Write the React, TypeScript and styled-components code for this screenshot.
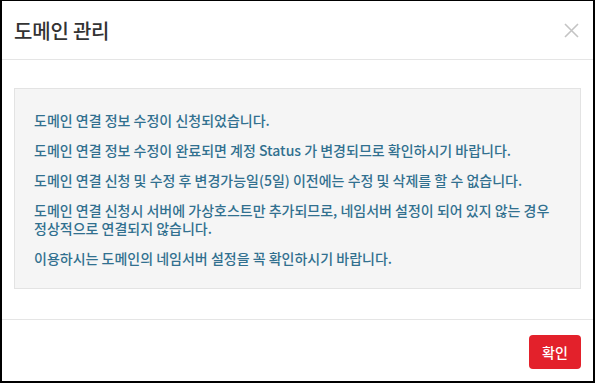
import React from 'react';
import styled, { createGlobalStyle } from 'styled-components';

const GlobalStyle = createGlobalStyle`
	html, body {
		margin: 0;
		padding: 0;
		background: #000;
	}
	* {
		box-sizing: border-box;
	}
`;

const Modal = styled.div`
	width: 595px;
	height: 383px;
	background: white;
	border-style: solid;
	border-color: #000;
	border-width: 1px 2px 2px 2px;
	display: flex;
	flex-direction: column;
	font-family: 'Noto Sans CJK KR', 'Noto Sans', sans-serif;
`;

const Header = styled.div`
	height: 59px;
	padding: 0 14px 0 12px;
	display: flex;
	align-items: center;
	justify-content: space-between;
	border-bottom: 1px solid #e5e5e5;
`;

const Title = styled.h4`
	margin: 0;
	font-size: 20px;
	font-weight: 500;
	color: #333;
	letter-spacing: -0.2px;
`;

const Close = styled.button`
	width: 16px;
	height: 16px;
	padding: 0;
	border: none;
	background: none;
	display: flex;
	align-items: center;
	justify-content: center;
	cursor: pointer;
`;

const Body = styled.div`
	flex: 1;
	padding: 28px 12px 0 12px;
`;

const Notice = styled.div`
	background: #f5f5f5;
	border: 1px solid #e3e3e3;
	padding: 22px 19px 17px 19px;
	height: 201px;
`;

const Line = styled.p`
	margin: 0 0 12px 0;
	font-size: 14px;
	line-height: 18px;
	font-weight: 500;
	color: #31708f;
	word-break: keep-all;
`;

const Footer = styled.div`
	height: 62px;
	border-top: 1px solid #e5e5e5;
	padding: 15px 12px 0 0;
	display: flex;
	justify-content: flex-end;
	align-items: flex-start;
`;

const Button = styled.button`
	width: 52px;
	height: 34px;
	border: none;
	border-radius: 4px;
	background: #e3212b;
	color: white;
	font-family: inherit;
	font-size: 14px;
	font-weight: 500;
	cursor: pointer;
`;

const lines = [
	'도메인 연결 정보 수정이 신청되었습니다.',
	'도메인 연결 정보 수정이 완료되면 계정 Status 가 변경되므로 확인하시기 바랍니다.',
	'도메인 연결 신청 및 수정 후 변경가능일(5일) 이전에는 수정 및 삭제를 할 수 없습니다.',
	'도메인 연결 신청시 서버에 가상호스트만 추가되므로, 네임서버 설정이 되어 있지 않는 경우 정상적으로 연결되지 않습니다.',
	'이용하시는 도메인의 네임서버 설정을 꼭 확인하시기 바랍니다.',
];

const App: React.FC = () => {
	return (
		<>
			<GlobalStyle />
			<Modal>
				<Header>
					<Title>도메인 관리</Title>
					<Close aria-label="닫기">
						<svg width="15" height="15" viewBox="0 0 15 15">
							<path d="M1 1 L14 14 M14 1 L1 14" stroke="#c4c4c4" strokeWidth="1.6" />
						</svg>
					</Close>
				</Header>
				<Body>
					<Notice>
						{lines.map((text, i) => (
							<Line key={i}>{text}</Line>
						))}
					</Notice>
				</Body>
				<Footer>
					<Button>확인</Button>
				</Footer>
			</Modal>
		</>
	);
};

export default App;
